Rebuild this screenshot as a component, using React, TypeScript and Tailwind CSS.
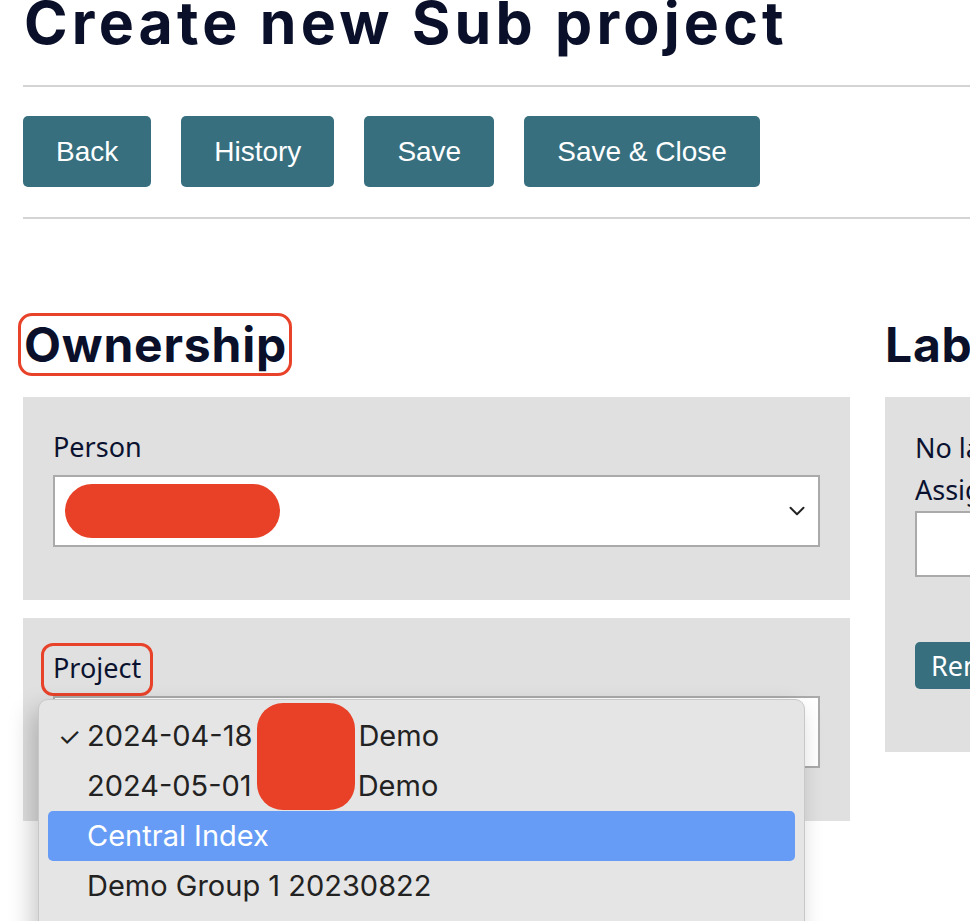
import { FunctionComponent, ReactNode } from "react";
import { ChevronDown } from "lucide-react";

const headingFont = { fontFamily: "Inter, 'Noto Sans', sans-serif" };

const ActionButton: FunctionComponent<{ label: string }> = ({ label }) => {
  return (
    <button className="h-[71px] rounded-[5px] bg-[#376f7f] px-[33px] font-['Liberation_Sans',Arial,sans-serif] text-[28px] text-white">
      {label}
    </button>
  );
};

const Field: FunctionComponent<{
  label: ReactNode;
  children?: ReactNode;
  overlay?: ReactNode;
}> = ({ label, children, overlay }) => {
  return (
    <div className="relative bg-[#e0e0e0] px-[30px] pt-[32px] pb-[53px]">
      <div className="mb-[10px] text-[27px] leading-[36px] text-[#0b1230]">{label}</div>
      <div className="relative flex h-[72px] items-center border-2 border-[#aaaaaa] bg-white pr-[8px] pl-[10px]">
        <div className="flex-1">{children}</div>
        <ChevronDown className="h-[26px] w-[26px] text-[#222]" strokeWidth={1.8} />
      </div>
      {overlay}
    </div>
  );
};

const ProjectMenu: FunctionComponent = () => {
  const items = [
    { text: "2024-04-18", tail: "Demo", checked: true },
    { text: "2024-05-01", tail: "Demo" },
    { text: "Central Index", active: true },
    { text: "Demo Group 1 20230822" },
  ];
  return (
    <div className="absolute top-[81px] left-[15px] z-10 h-[240px] w-[767px] rounded-t-[10px] border border-[#c8c8c8] bg-[#e5e5e5] px-[9px] pt-[11px] font-['Inter',sans-serif] text-[29px] text-[#222] shadow-[-6px_10px_24px_rgba(0,0,0,0.22)]">
      {items.map((item) => (
        <div
          key={item.text}
          className={
            item.active
              ? "flex h-[50px] items-center rounded-[5px] bg-[#669cf5] pl-[39px] text-white"
              : "relative flex h-[50px] items-center pl-[39px]"
          }
        >
          {item.checked && (
            <span className="absolute left-[10px] text-[26px]">✓</span>
          )}
          <span>{item.text}</span>
          {item.tail && <span className="ml-[106px]">{item.tail}</span>}
        </div>
      ))}
      {/* redaction */}
      <div className="absolute top-[3px] left-[218px] h-[107px] w-[98px] rounded-[26px] bg-[#e84127]" />
    </div>
  );
};

export default function App() {
  return (
    <div
      className="h-[921px] w-[970px] overflow-hidden bg-white pl-[23px]"
      style={{ fontFamily: "'Noto Sans', 'Open Sans', sans-serif" }}
    >
      <h1
        className="-mt-[6px] pl-[1px] text-[59px] leading-[58px] font-bold tracking-[4.2px] text-[#0a1029]"
        style={headingFont}
      >
        Create new Sub project
      </h1>
      <div className="mt-[33px] h-[2px] w-[1000px] bg-[#d4d4d4]" />
      <div className="mt-[29px] flex gap-[30px]">
        <ActionButton label="Back" />
        <ActionButton label="History" />
        <ActionButton label="Save" />
        <ActionButton label="Save & Close" />
      </div>
      <div className="mt-[30px] h-[2px] w-[1000px] bg-[#d4d4d4]" />

      <div className="mt-[97px] grid w-[1200px] grid-cols-[827px_400px] gap-x-[35px]">
        <div>
          <h2
            className="relative ml-[1px] h-[58px] text-[48px] leading-[58px] font-bold tracking-[0.8px] text-[#0a1029]"
            style={headingFont}
          >
            <span className="relative">
              Ownership
              <span className="absolute -top-[2px] -right-[5px] -bottom-[2px] -left-[6px] rounded-[14px] border-[3px] border-[#e8432a]" />
            </span>
          </h2>
          <div className="mt-[23px] flex flex-col gap-[18px]">
            <Field label="Person">
              <div className="h-[54px] w-[215px] rounded-full bg-[#e84127]" />
            </Field>
            <Field
              label={
                <span className="relative">
                  Project
                  <span className="absolute -top-[6px] -right-[12px] -bottom-[10px] -left-[12px] rounded-[12px] border-[3px] border-[#e8432a]" />
                </span>
              }
              overlay={<ProjectMenu />}
            />
          </div>
        </div>

        <div>
          <h2
            className="h-[58px] text-[48px] leading-[58px] font-bold tracking-[0.8px] text-[#0a1029]"
            style={headingFont}
          >
            Labels
          </h2>
          <div className="mt-[23px] h-[355px] bg-[#e0e0e0] px-[30px] pt-[30px] text-[27px] leading-[42px] text-[#0b1230]">
            <div>No labels assigned</div>
            <div>Assign label</div>
            <div className="h-[66px] border-2 border-[#aaaaaa] bg-white" />
            <button className="mt-[65px] h-[47px] rounded-[5px] bg-[#376f7f] px-[16px] text-[27px] text-white">
              Remove
            </button>
          </div>
        </div>
      </div>
    </div>
  );
}
